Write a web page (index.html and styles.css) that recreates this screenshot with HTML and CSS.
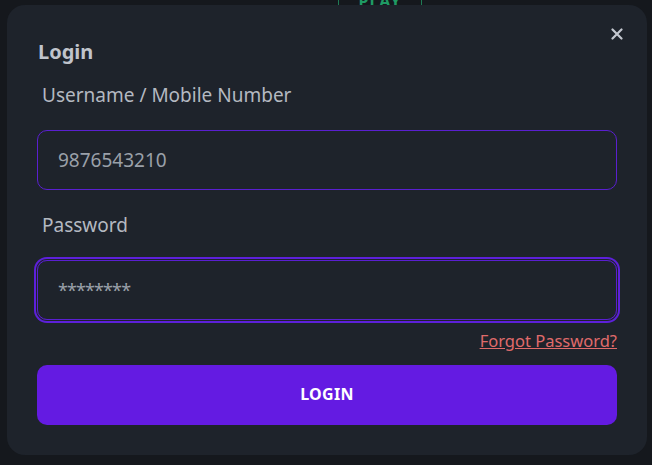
FILE: index.html
```html
<!DOCTYPE html>
<html lang="en">
<head>
<meta charset="utf-8">
<title>Login</title>
<link rel="stylesheet" href="styles.css">
</head>
<body>
<div class="backdrop-btn">PLAY</div>
<div class="modal">
  <button class="close" aria-label="Close">
    <svg width="12" height="12" viewBox="0 0 12 12"><path d="M1.5 1.5 L10.5 10.5 M10.5 1.5 L1.5 10.5" stroke="#c3c7cf" stroke-width="2.2" stroke-linecap="round"/></svg>
  </button>
  <h2 class="title">Login</h2>
  <label class="label">Username / Mobile Number</label>
  <div class="field">9876543210</div>
  <label class="label">Password</label>
  <div class="field focused"><span class="stars">********</span></div>
  <div class="forgot-row"><a class="forgot" href="#">Forgot Password?</a></div>
  <button class="login">LOGIN</button>
</div>
</body>
</html>
```
FILE: styles.css
```css
html, body {
  margin: 0;
  height: 100%;
}
body {
  background: #15181d;
  padding: 5px 0 0 7px;
  box-sizing: border-box;
  font-family: "Noto Sans", "Open Sans", sans-serif;
  position: relative;
  overflow: hidden;
}
.backdrop-btn {
  position: absolute;
  left: 338px;
  top: -14px;
  width: 82px;
  height: 30px;
  border: 1px solid #1f7a55;
  color: #1f9a64;
  font-weight: 700;
  font-size: 16px;
  text-align: center;
  line-height: 28px;
  letter-spacing: 1px;
}
.modal {
  position: relative;
  width: 640px;
  height: 450px;
  box-sizing: border-box;
  background: #1e232b;
  border-radius: 18px;
  padding: 34px 30px 0 30px;
  display: flex;
  flex-direction: column;
}
.close {
  position: absolute;
  top: 21px;
  right: 22px;
  background: none;
  border: 0;
  padding: 2px;
  cursor: pointer;
  display: flex;
}
.title {
  margin: 0 0 0 1px;
  font-size: 20px;
  line-height: 26px;
  font-weight: 700;
  color: #c0c4cc;
}
.label {
  margin: 17px 0 0 5px;
  font-size: 19px;
  line-height: 26px;
  color: #b4b9c1;
}
.field {
  margin-top: 22px;
  height: 60px;
  flex-shrink: 0;
  box-sizing: border-box;
  border: 1px solid #5a1fd0;
  border-radius: 10px;
  padding: 0 20px;
  display: flex;
  align-items: center;
  font-size: 19px;
  color: #9aa0a9;
}
.field + .label {
  margin-top: 22px;
}
.field.focused {
  box-shadow: 0 0 0 1px #1e232b, 0 0 0 3px #5d20da;
}
.stars {
  font-size: 18px;
  letter-spacing: -0.9px;
}
.forgot-row {
  display: flex;
  justify-content: flex-end;
  margin-top: 10px;
}
.forgot {
  font-size: 16.5px;
  line-height: 22px;
  color: #e06b6b;
  text-decoration: underline;
}
.login {
  margin-top: 13px;
  height: 60px;
  flex-shrink: 0;
  padding: 0 0 3px;
  border: 0;
  border-radius: 10px;
  background: #641be2;
  color: #ffffff;
  font-family: inherit;
  font-size: 16px;
  font-weight: 700;
  letter-spacing: 0.3px;
  cursor: pointer;
}
```
